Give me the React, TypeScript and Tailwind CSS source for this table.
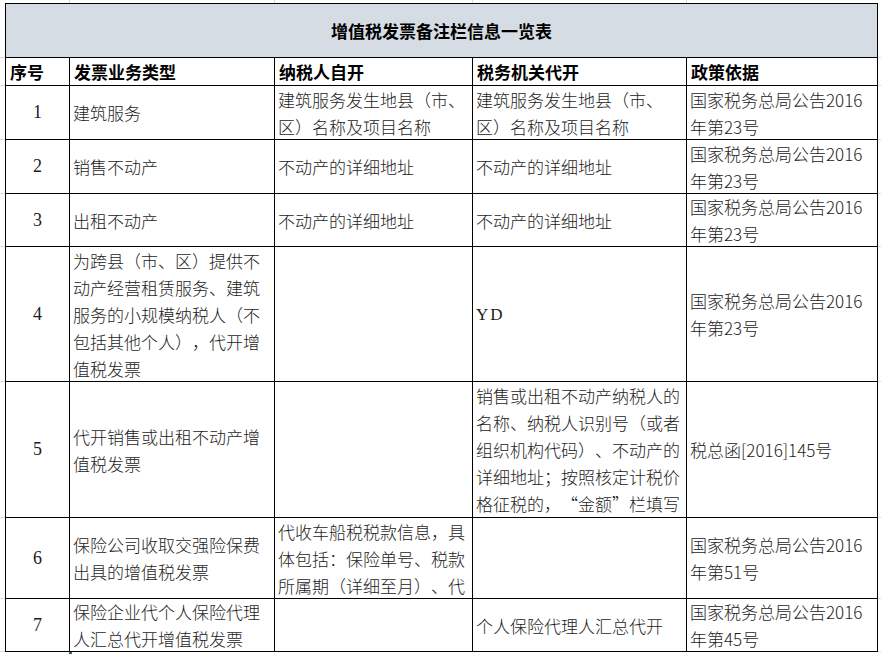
import React from "react";

type Row = {
  no: string;
  type: string[];
  self: string[];
  agent: string[];
  agentMono?: boolean;
  basis: string[];
};

const rows: Row[] = [
  {
    no: "1",
    type: ["建筑服务"],
    self: ["建筑服务发生地县（市、", "区）名称及项目名称"],
    agent: ["建筑服务发生地县（市、", "区）名称及项目名称"],
    basis: ["国家税务总局公告2016", "年第23号"],
  },
  {
    no: "2",
    type: ["销售不动产"],
    self: ["不动产的详细地址"],
    agent: ["不动产的详细地址"],
    basis: ["国家税务总局公告2016", "年第23号"],
  },
  {
    no: "3",
    type: ["出租不动产"],
    self: ["不动产的详细地址"],
    agent: ["不动产的详细地址"],
    basis: ["国家税务总局公告2016", "年第23号"],
  },
  {
    no: "4",
    type: [
      "为跨县（市、区）提供不",
      "动产经营租赁服务、建筑",
      "服务的小规模纳税人（不",
      "包括其他个人），代开增",
      "值税发票",
    ],
    self: [],
    agent: ["YD"],
    agentMono: true,
    basis: ["国家税务总局公告2016", "年第23号"],
  },
  {
    no: "5",
    type: ["代开销售或出租不动产增", "值税发票"],
    self: [],
    agent: [
      "销售或出租不动产纳税人的",
      "名称、纳税人识别号（或者",
      "组织机构代码）、不动产的",
      "详细地址；按照核定计税价",
      "格征税的，“金额”栏填写",
    ],
    basis: ["税总函[2016]145号"],
  },
  {
    no: "6",
    type: ["保险公司收取交强险保费", "出具的增值税发票"],
    self: ["代收车船税税款信息，具", "体包括：保险单号、税款", "所属期（详细至月）、代"],
    agent: [],
    basis: ["国家税务总局公告2016", "年第51号"],
  },
  {
    no: "7",
    type: ["保险企业代个人保险代理", "人汇总代开增值税发票"],
    self: [],
    agent: ["个人保险代理人汇总代开"],
    basis: ["国家税务总局公告2016", "年第45号"],
  },
];

const headers = ["序号", "发票业务类型", "纳税人自开", "税务机关代开", "政策依据"];

// faint sheet gridlines outside the table
const gutterRows = [58, 28, 54, 54, 53, 135, 136, 81, 53];

function Gutter({ className }: { className: string }) {
  return (
    <div className={`flex flex-col ${className}`}>
      {gutterRows.map((h, i) => (
        <div key={i} className="border-b border-[#d5dae2] shrink-0" style={{ height: h }} />
      ))}
    </div>
  );
}

function Lines({ lines, mono }: { lines: string[]; mono?: boolean }) {
  return (
    <div className="bg-white flex flex-col justify-center px-[3px] overflow-hidden whitespace-nowrap leading-[27px] font-light">
      {lines.map((l, i) => (
        <div
          key={i}
          className={mono ? "font-['Liberation_Serif',serif] text-[17px] tracking-[2px] font-normal" : ""}
        >
          {l}
        </div>
      ))}
    </div>
  );
}

export default function App() {
  return (
    <div className="w-[881px] h-[654px] overflow-hidden bg-white flex font-['Noto_Sans_CJK_SC','Liberation_Sans',sans-serif] text-[17px] text-[#1c1c1c] [text-spacing-trim:space-all]">
      <Gutter className="w-[5px] shrink-0" />
      <div className="w-[873px] shrink-0 flex flex-col">
        <div className="h-[3px] flex shrink-0">
          <div className="w-[65px] border-r border-[#d5dae2]" />
          <div className="w-[205px] border-r border-[#d5dae2]" />
          <div className="w-[198px] border-r border-[#d5dae2]" />
          <div className="w-[214px] border-r border-[#d5dae2]" />
        </div>
        <div className="grid grid-cols-[63px_204px_197px_213px_190px] grid-rows-[53px_27px_53px_53px_52px_134px_135px_80px_52px] gap-px bg-black border border-black shrink-0">
          <div className="col-span-5 bg-[#d6dce4] flex items-center justify-center font-bold text-black">
            增值税发票备注栏信息一览表
          </div>
          {headers.map((h) => (
            <div key={h} className="bg-white flex items-center px-[4px] font-bold text-black leading-none">
              {h}
            </div>
          ))}
          {rows.map((r) => (
            <React.Fragment key={r.no}>
              <div className="bg-white flex items-center justify-center font-['Liberation_Serif',serif] text-[18px]">
                {r.no}
              </div>
              <Lines lines={r.type} />
              <Lines lines={r.self} />
              <Lines lines={r.agent} mono={r.agentMono} />
              <Lines lines={r.basis} />
            </React.Fragment>
          ))}
        </div>
        <div className="h-[2px] flex shrink-0">
          <div className="w-[64px]" />
          <div className="w-[3px] bg-[#217346]" />
        </div>
      </div>
      <Gutter className="flex-1" />
    </div>
  );
}
